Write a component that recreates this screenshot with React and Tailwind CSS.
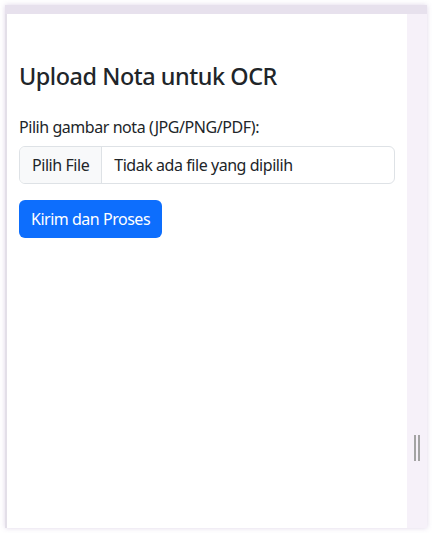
export default function App() {
  return (
    <div className="w-[432px] h-[533px] bg-white p-[5px] overflow-hidden" style={{ fontFamily: '"Noto Sans", sans-serif' }}>
      <div className="h-full flex flex-col shadow-[0_0_5px_rgba(150,120,180,0.3)]">
        <div className="h-[9px] bg-[#e7e1ed] shrink-0" />
        <div className="flex flex-1 min-h-0">
          <div className="w-[2px] bg-[#e3dfe8]" />
          <div className="flex-1 bg-white px-3 pt-[48px] tracking-[-0.028em]">
            <h3 className="text-[23.4px] leading-[28px] font-medium text-[#212529]">Upload Nota untuk OCR</h3>
            <label className="block mt-[25px] text-[16px] leading-[24px] text-[#212529]">Pilih gambar nota (JPG/PNG/PDF):</label>
            <div className="mt-[7px] h-[38px] flex border border-[#dee2e6] rounded-[6px] overflow-hidden text-[16px] text-[#212529]">
              <div className="bg-[#f8f9fa] border-r border-[#dee2e6] px-3 flex items-center">Pilih File</div>
              <div className="px-3 flex items-center">Tidak ada file yang dipilih</div>
            </div>
            <button className="mt-4 h-[38px] px-3 rounded-[6px] bg-[#0d6efd] text-white text-[16px] tracking-[-0.03em]">Kirim dan Proses</button>
          </div>
          <div className="w-[20px] bg-[#f6f1f9] flex justify-center pt-[421px]">
            <div className="flex gap-[2px] h-[26px]">
              <div className="w-[2px] bg-[#a3a3a3]" />
              <div className="w-[2px] bg-[#a3a3a3]" />
            </div>
          </div>
        </div>
      </div>
    </div>
  );
}
